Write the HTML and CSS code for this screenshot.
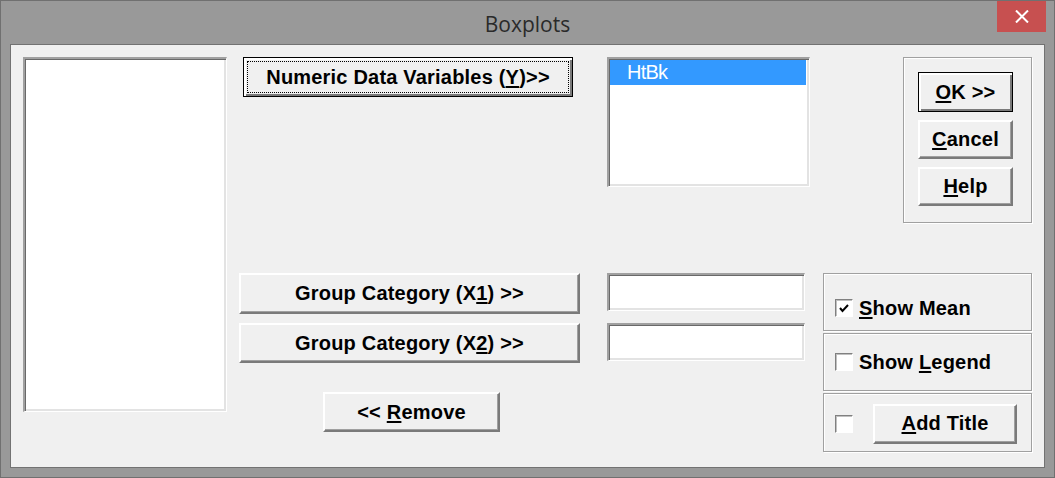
FILE: index.html
```html
<!DOCTYPE html>
<html lang="en">
<head>
  <meta charset="UTF-8" />
  <title>Boxplots</title>
  <link rel="stylesheet" href="styles.css">
</head>
<body>

  <div class="window">
    <div class="titlebar">
      <span class="title">Boxplots</span>
      <button class="close" title="Close">
        <svg width="14" height="13" viewBox="0 0 14 13">
          <path d="M1 0.5 L13 12.5 M13 0.5 L1 12.5" stroke="#fff" stroke-width="2" fill="none" />
        </svg>
      </button>
    </div>

    <div class="client">
      <div class="sunken list-source"></div>

      <div class="col col-actions">
        <button class="btn btn-default btn-numeric"><span class="focus">Numeric Data Variables (<u>Y</u>)&gt;&gt;</span></button>
        <button class="btn btn-group btn-x1">Group Category (X<u>1</u>) &gt;&gt;</button>
        <button class="btn btn-group btn-x2">Group Category (X<u>2</u>) &gt;&gt;</button>
        <button class="btn btn-remove">&lt;&lt; <u>R</u>emove</button>
      </div>

      <div class="col col-fields">
        <div class="sunken list-y">
          <div class="item selected">HtBk</div>
        </div>
        <div class="sunken field field-x1"></div>
        <div class="sunken field field-x2"></div>
      </div>

      <div class="col col-options">
        <div class="etched cmd-group">
          <button class="btn btn-default btn-cmd btn-ok"><u>O</u>K &gt;&gt;</button>
          <button class="btn btn-cmd btn-cancel"><u>C</u>ancel</button>
          <button class="btn btn-cmd btn-help"><u>H</u>elp</button>
        </div>

        <div class="etched opt opt-mean">
          <span class="check">
            <svg width="10" height="9" viewBox="0 0 10 9">
              <path d="M1 4 L3.5 7 L9 1" stroke="#000" stroke-width="2" fill="none" />
            </svg>
          </span>
          <span class="opt-label"><u>S</u>how Mean</span>
        </div>
        <div class="etched opt opt-legend">
          <span class="check"></span>
          <span class="opt-label">Show <u>L</u>egend</span>
        </div>
        <div class="etched opt opt-title">
          <span class="check"></span>
          <button class="btn btn-title"><u>A</u>dd Title</button>
        </div>
      </div>
    </div>
  </div>

</body>
</html>
```

FILE: styles.css
```css
body {
  margin: 0;
  background: #999;
  font-family: "Liberation Sans", Arial, sans-serif;
}
.window {
  width: 1055px;
  height: 478px;
  box-sizing: border-box;
  border: 1px solid #707070;
  background: #999;
  display: flex;
  flex-direction: column;
}
.titlebar {
  position: relative;
  height: 43px;
  text-align: center;
}
.title {
  font-family: "Open Sans", "Noto Sans", sans-serif;
  font-size: 21px;
  line-height: 43px;
  color: #2a2a2a;
  position: relative;
  top: 2px;
}
.close {
  position: absolute;
  top: 0;
  right: 8px;
  width: 49px;
  height: 31px;
  border: none;
  padding: 0;
  background: #c75050;
  display: flex;
  align-items: center;
  justify-content: center;
}
.client {
  margin: 0 9px 9px 9px;
  height: 424px;
  box-sizing: border-box;
  border: 1px solid #727272;
  background: #f0f0f0;
  padding: 12px 0 0 12px;
  display: flex;
  align-items: flex-start;
}
.col {
  display: flex;
  flex-direction: column;
  align-items: flex-start;
}

/* 3D borders */
.sunken {
  box-sizing: border-box;
  background: #fff;
  border-style: solid;
  border-width: 2px 1px 1px 2px;
  border-color: #a0a0a0 #fff #fff #a0a0a0;
  box-shadow: inset 1px 1px #696969, inset -2px -2px #e3e3e3;
}
.etched {
  box-sizing: border-box;
  border: 1px solid #a0a0a0;
  box-shadow: inset 1px 1px #fff, 1px 1px #fff;
}
.btn {
  box-sizing: border-box;
  background: #f0f0f0;
  font-family: "Liberation Sans", Arial, sans-serif;
  font-weight: bold;
  font-size: 20px;
  letter-spacing: 0.2px;
  color: #000;
  border-style: solid;
  border-width: 2px;
  border-color: #fff #7a7a7a #7a7a7a #fff;
  box-shadow: inset -1px -1px #a0a0a0;
  padding: 0;
  cursor: pointer;
}
.btn u {
  text-underline-offset: 2px;
}
.btn-default {
  border: 1px solid #000;
  box-shadow: inset 2px 2px #fff, inset -2px -2px #7a7a7a;
}

/* left list */
.list-source {
  width: 204px;
  height: 355px;
  margin-right: 12px;
}

/* action buttons */
.col-actions {
  width: 341px;
  margin-right: 27px;
}
.btn-numeric {
  width: 330px;
  height: 40px;
  margin-left: 4px;
  padding: 3px;
  display: flex;
}
.focus {
  flex: 1;
  border: 1px dotted #000;
  display: flex;
  align-items: center;
  justify-content: center;
}
.btn-group {
  width: 341px;
  height: 41px;
}
.btn-x1 {
  margin-top: 176px;
}
.btn-x2 {
  margin-top: 9px;
  height: 40px;
}
.btn-remove {
  margin-top: 29px;
  margin-left: 84px;
  width: 177px;
  height: 40px;
}

/* fields */
.col-fields {
  width: 203px;
  margin-right: 13px;
}
.list-y {
  width: 203px;
  height: 130px;
  padding: 1px 3px 0 1px;
}
.item {
  height: 25px;
  line-height: 25px;
  padding-left: 17px;
  font-size: 20px;
  letter-spacing: -0.8px;
}
.item.selected {
  background: #3399ff;
  color: #fff;
}
.field {
  width: 198px;
  height: 38px;
}
.field-x1 {
  margin-top: 86px;
}
.field-x2 {
  margin-top: 12px;
}

/* options */
.col-options {
  width: 209px;
}
.cmd-group {
  margin-left: 80px;
  width: 129px;
  height: 166px;
  padding: 14px 0 0 14px;
  display: flex;
  flex-direction: column;
  gap: 8px;
}
.btn-cmd {
  width: 95px;
  height: 39px;
}
.btn-ok {
  height: 40px;
}
.opt {
  width: 209px;
  height: 58px;
  display: flex;
  align-items: center;
  padding-left: 11px;
}
.opt-mean {
  margin-top: 50px;
  padding-top: 12px;
}
.opt-legend {
  margin-top: 2px;
  padding-top: 0;
}
.opt-title {
  margin-top: 2px;
  height: 59px;
  padding-top: 2px;
}
.check {
  box-sizing: border-box;
  width: 18px;
  height: 18px;
  background: #fff;
  border-style: solid;
  border-width: 1px;
  border-color: #808080 #fff #fff #808080;
  box-shadow: inset 1px 1px #c0c0c0;
  display: flex;
  align-items: center;
  justify-content: center;
  margin-right: 6px;
}
.opt-label {
  font-weight: bold;
  font-size: 20px;
  letter-spacing: 0.2px;
}
.opt-label u {
  text-underline-offset: 2px;
}
.btn-title {
  width: 144px;
  height: 40px;
  margin-left: 14px;
}
```
